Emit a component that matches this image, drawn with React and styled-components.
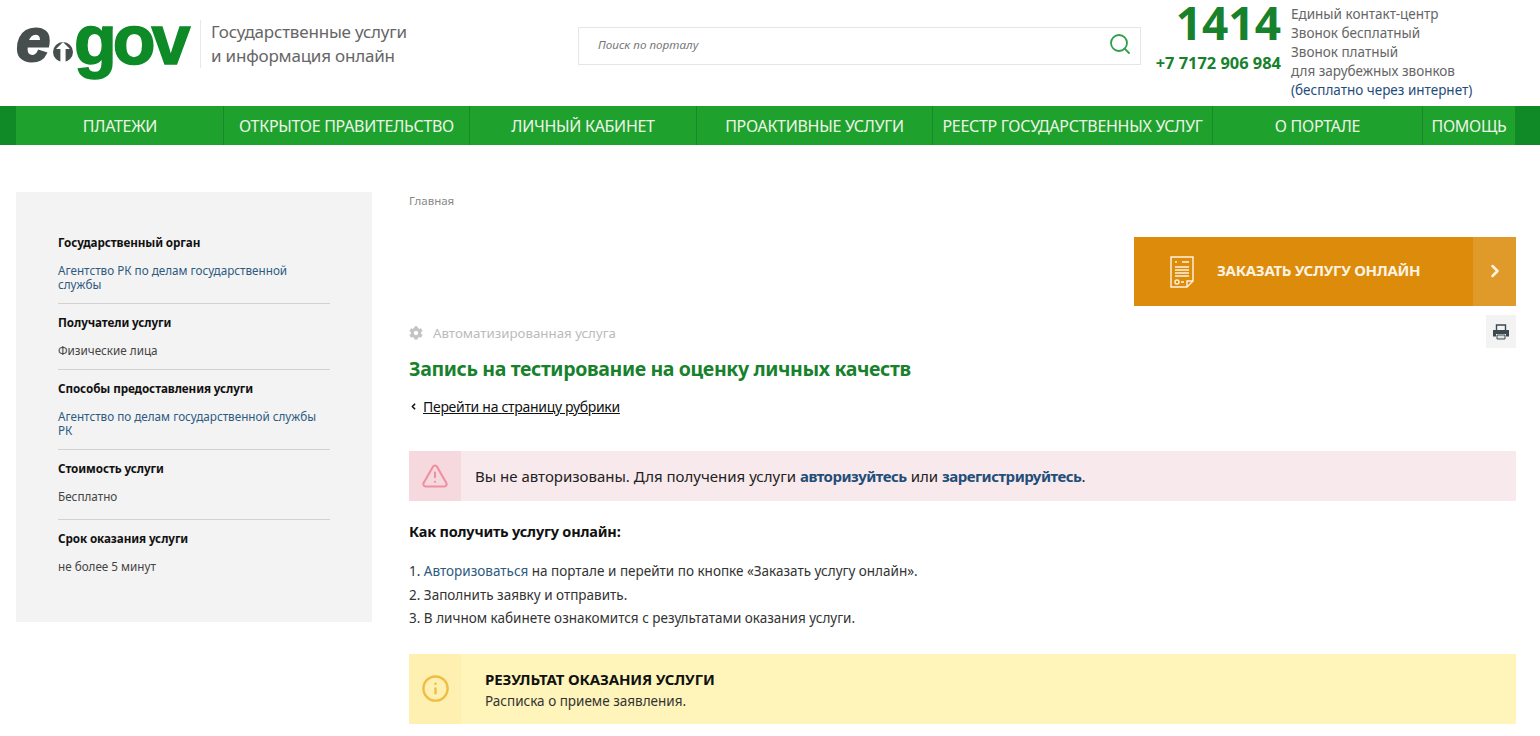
import React from "react"
import styled, { createGlobalStyle } from "styled-components"
import { Search, TriangleAlert, Info, ChevronRight, ChevronLeft } from "lucide-react"
import { FaCog } from "react-icons/fa"

const GlobalStyle = createGlobalStyle`
  html, body {
    margin: 0;
    padding: 0;
    overflow: hidden;
    background: #fff;
    font-family: "Noto Sans", "Liberation Sans", sans-serif;
    color: #222;
  }
  * { box-sizing: border-box; }
`

const Header = styled.header`
  height: 106px;
  display: flex;
  align-items: flex-start;
  padding-left: 16px;
`
const Logo = styled.div`
  width: 175px;
  height: 80px;
  display: flex;
  align-items: flex-start;
  font-family: "Liberation Sans", sans-serif;
  font-weight: 700;
  line-height: 80px;
`
const LogoE = styled.span`
  font-size: 62px;
  font-style: italic;
  color: #474f4e;
  -webkit-text-stroke: 2px #474f4e;
  width: 36px;
`
const LogoMark = styled.svg`
  width: 22px;
  height: 22px;
  margin-top: 41px;
  flex: none;
`
const LogoGov = styled.span`
  font-size: 70px;
  color: #0e8a26;
  -webkit-text-stroke: 1.5px #0e8a26;
  letter-spacing: -4px;
`
const Tagline = styled.div`
  margin: 20px 0 0 9px;
  height: 48px;
  padding-left: 10px;
  border-left: 1px solid #e8e8e8;
  width: 378px;
  font-size: 17px;
  line-height: 24px;
  letter-spacing: -0.2px;
  color: #666;
`
const SearchBox = styled.div`
  margin-top: 27px;
  width: 563px;
  height: 38px;
  border: 1px solid #e6e6e6;
  display: flex;
  align-items: center;
  justify-content: space-between;
  padding: 0 8px 5px 19px;
  font-size: 11.7px;
  font-style: italic;
  color: #777;
  svg { color: #2e9e4a; }
`
const Phones = styled.div`
  width: 140px;
  text-align: right;
  color: #17812c;
  font-weight: 700;
`
const BigPhone = styled.div`
  margin-top: -9px;
  font-size: 46px;
  line-height: 62px;
`
const SmallPhone = styled.div`
  margin-top: -2px;
  font-size: 16.4px;
  line-height: 24px;
  white-space: nowrap;
`
const ContactText = styled.div`
  margin: 5px 0 0 10px;
  font-size: 13.5px;
  line-height: 19px;
  color: #666;
  white-space: nowrap;
`
const ContactLink = styled.div`
  color: #1f4e79;
`

const Nav = styled.nav`
  height: 39px;
  display: grid;
  grid-template-columns: 16px 207px 246px 227px 236px 280px 210px 93px 1fr;
  background: #1fa12e;
`
const NavEdge = styled.div`
  background: #0f8a27;
`
const NavItem = styled.a`
  display: flex;
  align-items: center;
  justify-content: center;
  font-size: 16px;
  letter-spacing: -0.3px;
  color: #ecf6e6;
  white-space: nowrap;
  border-left: 1px solid ${p => (p.$first ? "transparent" : "#158a28")};
`

const Body = styled.div`
  display: flex;
  align-items: flex-start;
  padding: 47px 24px 0 16px;
  gap: 37px;
`
const Sidebar = styled.aside`
  width: 356px;
  height: 430px;
  flex: none;
  background: #f3f3f3;
  padding: 42px 42px 0;
`
const SideBlock = styled.div`
  padding-bottom: ${p => p.$pad || 12}px;
  margin-bottom: 10px;
  border-bottom: 1px solid ${p => (p.$last ? "transparent" : "#d2d2d2")};
`
const SideTitle = styled.div`
  font-size: 11.7px;
  font-weight: 700;
  letter-spacing: -0.1px;
  line-height: 16px;
  color: #111;
  margin-bottom: 13px;
`
const SideText = styled.div`
  font-size: 11.7px;
  line-height: 14px;
  color: ${p => (p.$link ? "#2d5a80" : "#444")};
`

const Main = styled.main`
  flex: 1;
  min-width: 0;
`
const Breadcrumb = styled.div`
  margin-top: 2px;
  font-size: 11.5px;
  line-height: 14px;
  color: #888;
`
const OrderRow = styled.div`
  display: flex;
  justify-content: flex-end;
  margin-top: 29px;
`
const OrderButton = styled.a`
  width: 382px;
  height: 69px;
  display: flex;
  align-items: center;
  background: #dd8b0a;
  color: #fdf3e2;
  font-size: 15px;
  font-weight: 700;
  letter-spacing: -0.3px;
`
const OrderIcon = styled.svg`
  width: 24px;
  height: 32px;
  margin: 0 23px 0 36px;
  flex: none;
`
const OrderLabel = styled.span`
  flex: 1;
  padding-bottom: 3px;
`
const OrderArrow = styled.span`
  width: 43px;
  height: 100%;
  display: flex;
  align-items: center;
  justify-content: center;
  padding-bottom: 2px;
  background: #e09a2a;
`
const MetaRow = styled.div`
  display: flex;
  justify-content: space-between;
  margin-top: 9px;
  height: 33px;
`
const AutoLabel = styled.div`
  display: flex;
  align-items: center;
  gap: 10px;
  height: 36px;
  font-size: 13.3px;
  color: #bbb;
`
const PrintButton = styled.a`
  width: 30px;
  height: 33px;
  display: flex;
  align-items: center;
  justify-content: center;
  background: #f3f3f3;
`
const PrintIcon = styled.svg`
  width: 16px;
  height: 16px;
`
const Heading = styled.h1`
  margin: 6px 0 0;
  font-size: 19.5px;
  letter-spacing: -0.36px;
  line-height: 30px;
  font-weight: 700;
  color: #17812c;
`
const BackRow = styled.div`
  display: flex;
  align-items: center;
  gap: 5px;
  margin-top: 12px;
  height: 20px;
  font-size: 14px;
  letter-spacing: -0.3px;
  color: #111;
`
const BackLink = styled.a`
  text-decoration: underline;
`
const Notice = styled.div`
  display: flex;
  align-items: center;
  background: ${p => p.$bg};
  height: ${p => p.$h}px;
  margin-top: ${p => p.$top}px;
`
const NoticeIcon = styled.div`
  width: 52px;
  height: 100%;
  flex: none;
  display: flex;
  align-items: center;
  justify-content: center;
  background: ${p => p.$bg};
  color: ${p => p.$color};
`
const NoticeText = styled.div`
  margin-left: ${p => p.$left}px;
  font-size: 15px;
  color: #222;
`
const StrongLink = styled.a`
  font-weight: 700;
  letter-spacing: -0.5px;
  color: #1f4e79;
`
const HowTitle = styled.div`
  margin-top: 20px;
  font-size: 14.5px;
  letter-spacing: -0.2px;
  line-height: 20px;
  font-weight: 700;
  color: #111;
`
const Steps = styled.div`
  margin-top: 19px;
  font-size: 13.5px;
  line-height: 23.5px;
  color: #333;
`
const StepLink = styled.a`
  color: #2d5a80;
`
const ResultBody = styled.div`
  padding-top: 4px;
`
const ResultTitle = styled.div`
  font-size: 15px;
  letter-spacing: -0.15px;
  line-height: 21px;
  font-weight: 700;
  color: #111;
`
const ResultText = styled.div`
  margin-top: 1px;
  font-size: 13.5px;
  line-height: 21px;
  color: #333;
`

const navItems = [
  "ПЛАТЕЖИ",
  "ОТКРЫТОЕ ПРАВИТЕЛЬСТВО",
  "ЛИЧНЫЙ КАБИНЕТ",
  "ПРОАКТИВНЫЕ УСЛУГИ",
  "РЕЕСТР ГОСУДАРСТВЕННЫХ УСЛУГ",
  "О ПОРТАЛЕ",
  "ПОМОЩЬ",
]

const sideBlocks = [
  { title: "Государственный орган", text: "Агентство РК по делам государственной службы", link: true },
  { title: "Получатели услуги", text: "Физические лица" },
  { title: "Способы предоставления услуги", text: "Агентство по делам государственной службы РК", link: true },
  { title: "Стоимость услуги", text: "Бесплатно", pad: 16 },
  { title: "Срок оказания услуги", text: "не более 5 минут", last: true },
]

const App = () => (
  <>
    <GlobalStyle />
    <Header>
      <Logo>
        <LogoE>e</LogoE>
        <LogoMark viewBox="0 0 22 22">
          <circle cx="11" cy="11" r="10" fill="#474f4e" />
          <path d="M11 1 L18 8 H13.6 V22 H8.4 V8 H4 Z" fill="#fff" />
        </LogoMark>
        <LogoGov>gov</LogoGov>
      </Logo>
      <Tagline>
        Государственные услуги
        <br />
        и информация онлайн
      </Tagline>
      <SearchBox>
        Поиск по порталу
        <Search size={24} strokeWidth={1.8} />
      </SearchBox>
      <Phones>
        <BigPhone>1414</BigPhone>
        <SmallPhone>+7 7172 906 984</SmallPhone>
      </Phones>
      <ContactText>
        Единый контакт-центр
        <br />
        Звонок бесплатный
        <br />
        Звонок платный
        <br />
        для зарубежных звонков
        <ContactLink>(бесплатно через интернет)</ContactLink>
      </ContactText>
    </Header>

    <Nav>
      <NavEdge />
      {navItems.map((item, i) => (
        <NavItem key={item} $first={i === 0}>
          {item}
        </NavItem>
      ))}
      <NavEdge />
    </Nav>

    <Body>
      <Sidebar>
        {sideBlocks.map(block => (
          <SideBlock key={block.title} $last={block.last} $pad={block.pad}>
            <SideTitle>{block.title}</SideTitle>
            <SideText $link={block.link}>{block.text}</SideText>
          </SideBlock>
        ))}
      </Sidebar>

      <Main>
        <Breadcrumb>Главная</Breadcrumb>
        <OrderRow>
          <OrderButton>
            <OrderIcon viewBox="0 0 24 32" fill="none" stroke="#fdf3e2" strokeWidth="1.4">
              <path d="M1 1 H23 V25 L17 31 H1 Z" />
              <path d="M5 6 H7 M12 6 H19 M5 11 H19 M5 14 H19 M5 17 H19 M5 20 H19" />
              <circle cx="7" cy="26" r="2" />
              <path d="M11 26 H14 M23 25 H17 V31" />
            </OrderIcon>
            <OrderLabel>ЗАКАЗАТЬ УСЛУГУ ОНЛАЙН</OrderLabel>
            <OrderArrow>
              <ChevronRight size={20} strokeWidth={3} />
            </OrderArrow>
          </OrderButton>
        </OrderRow>

        <MetaRow>
          <AutoLabel>
            <FaCog size={14} color="#c4c4c4" />
            Автоматизированная услуга
          </AutoLabel>
          <PrintButton>
            <PrintIcon viewBox="0 0 16 16">
              <path d="M3.5 6 V1 H12.5 V6" fill="none" stroke="#3c4a50" strokeWidth="1.4" />
              <path d="M0 6 H16 V12.5 H13 V10 H3 V12.5 H0 Z" fill="#3c4a50" />
              <path d="M4 11 H12 V15 H4 Z" fill="#dfe3e3" stroke="#3c4a50" />
            </PrintIcon>
          </PrintButton>
        </MetaRow>

        <Heading>Запись на тестирование на оценку личных качеств</Heading>

        <BackRow>
          <ChevronLeft size={9} strokeWidth={4.5} />
          <BackLink>Перейти на страницу рубрики</BackLink>
        </BackRow>

        <Notice $bg="#f8e9ec" $h={50} $top={35}>
          <NoticeIcon $bg="#f5d9de" $color="#f08fa0">
            <TriangleAlert size={28} strokeWidth={1.8} />
          </NoticeIcon>
          <NoticeText $left={14}>
            Вы не авторизованы. Для получения услуги <StrongLink>авторизуйтесь</StrongLink> или{" "}
            <StrongLink>зарегистрируйтесь</StrongLink>.
          </NoticeText>
        </Notice>

        <HowTitle>Как получить услугу онлайн:</HowTitle>

        <Steps>
          1. <StepLink>Авторизоваться</StepLink> на портале и перейти по кнопке «Заказать услугу онлайн».
          <br />
          2. Заполнить заявку и отправить.
          <br />
          3. В личном кабинете ознакомится с результатами оказания услуги.
        </Steps>

        <Notice $bg="#fff5bb" $h={70} $top={23}>
          <NoticeIcon $bg="#fdf0b0" $color="#f0bc46">
            <Info size={29} strokeWidth={2} />
          </NoticeIcon>
          <NoticeText $left={24}>
            <ResultBody>
              <ResultTitle>РЕЗУЛЬТАТ ОКАЗАНИЯ УСЛУГИ</ResultTitle>
              <ResultText>Расписка о приеме заявления.</ResultText>
            </ResultBody>
          </NoticeText>
        </Notice>
      </Main>
    </Body>
  </>
)

export default App
